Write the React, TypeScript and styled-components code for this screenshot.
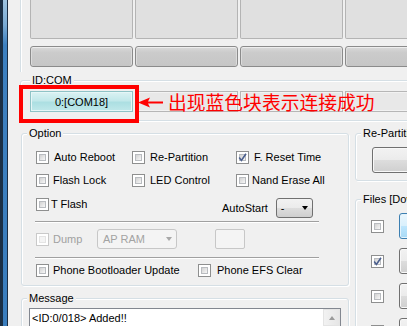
import React from 'react';
import styled, { createGlobalStyle } from 'styled-components';

const GlobalStyle = createGlobalStyle`
  html, body { margin: 0; padding: 0; background: #f0f0f0; }
  body { font-family: "Liberation Sans", Arial, sans-serif; font-size: 11px; color: #000; }
  * { box-sizing: border-box; }
`;

const Window = styled.div`
  width: 407px;
  height: 326px;
  overflow: hidden;
  display: flex;
  background: #f0f0f0;
`;

const Edge = styled.div`
  width: 8px;
  flex-shrink: 0;
  background:
    linear-gradient(to right, #1b2f45 0, #1b2f45 3px, transparent 3px, transparent 7px, #1a2c42 7px),
    linear-gradient(to bottom, #9ec3e0 0, #7aaad3 25px, #3d80c0 45px, #3a7dbd 100%);
`;

const Content = styled.div`
  flex: 0 0 399px;
  padding-left: 12px;
  display: flex;
  flex-direction: column;
  & > * { flex-shrink: 0; }
`;

const TopSection = styled.div`
  height: 72px;
  width: 450px;
  border-left: 1px solid #d5dfe5;
  box-shadow: inset 1px 0 0 #fff;
  padding-left: 9px;
  display: grid;
  grid-template-columns: repeat(4, 103px);
  grid-template-rows: 39px 21px;
  column-gap: 2px;
  row-gap: 7px;
  align-content: start;
`;

const PortSlot = styled.div`
  border: 1px solid #b4b4b4;
  border-top: 0;
  border-radius: 0 0 2px 2px;
  background: #e0e0e0;
`;

const PortButton = styled.div`
  border: 1px solid #8b8b8b;
  border-radius: 3px;
  background: linear-gradient(#dadada, #cbcbcb 30%, #c6c6c6);
  box-shadow: inset 0 1px 0 #ededed, inset 1px 0 0 #dcdcdc, inset -1px 0 0 #dcdcdc;
`;

const Group = styled.div<{ $w: number; $h?: number; $mt?: number }>`
  position: relative;
  width: ${p => p.$w}px;
  ${p => (p.$h ? `height: ${p.$h}px;` : '')}
  margin-top: ${p => p.$mt ?? 0}px;
  border: 1px solid #d5dfe5;
  border-radius: 3px;
  box-shadow: inset 1px 1px 0 #fff, 1px 1px 0 #fff;
  display: flex;
  flex-direction: column;
  flex-shrink: 0;
  & > * { flex-shrink: 0; }
`;

const Legend = styled.div<{ $ml: number }>`
  align-self: flex-start;
  height: 13px;
  line-height: 13px;
  margin: -7px 0 0 ${p => p.$ml}px;
  padding: 0 2px;
  background: #f0f0f0;
  white-space: nowrap;
`;

const FieldRow = styled.div`
  margin: 4px 0 8px;
  padding-left: 9px;
  display: grid;
  grid-template-columns: repeat(4, 103px);
  column-gap: 2px;
  height: 21px;
`;

const ComField = styled.div<{ $active?: boolean }>`
  border: 1px solid ${p => (p.$active ? '#8fc3c6' : '#b6b6b6')};
  background: ${p =>
    p.$active
      ? 'linear-gradient(#dbf2f3, #c2e8ea 45%, #acdfe2 55%, #c0e8ea)'
      : '#e8e8e8'};
  box-shadow: inset 0 0 0 1px ${p => (p.$active ? '#e6f6f7' : '#f2f2f2')};
  display: flex;
  align-items: center;
  justify-content: center;
  white-space: nowrap;
`;

const RedFrame = styled.div`
  position: absolute;
  left: -2px;
  top: 4px;
  width: 120px;
  height: 38px;
  border: 4px solid #ff0000;
`;

const Callout = styled.div`
  position: absolute;
  left: 117px;
  top: 9px;
  display: flex;
  align-items: center;
  gap: 5px;
  white-space: nowrap;
`;

const CalloutText = styled.span`
  font-family: "Noto Sans CJK SC", "Noto Sans CJK JP", sans-serif;
  font-size: 18.8px;
  line-height: 24px;
  color: #ff0000;
`;

const LowerRow = styled.div`
  margin-top: 12px;
  padding-left: 1px;
  display: flex;
  align-items: flex-start;
  gap: 6px;
`;

const Column = styled.div`
  display: flex;
  flex-direction: column;
  flex-shrink: 0;
  & > * { flex-shrink: 0; }
`;

const Row = styled.div<{ $mt: number; $h: number; $align?: string }>`
  margin-top: ${p => p.$mt}px;
  height: ${p => p.$h}px;
  padding-left: 14px;
  display: flex;
  align-items: ${p => p.$align ?? 'center'};
  white-space: nowrap;
`;

const CheckItem = styled.label<{ $w?: number; $gap: number; $disabled?: boolean }>`
  ${p => (p.$w ? `width: ${p.$w}px;` : '')}
  flex-shrink: 0;
  height: 13px;
  display: flex;
  align-items: center;
  gap: ${p => p.$gap}px;
  line-height: 13px;
  color: ${p => (p.$disabled ? '#a0a0a0' : '#000')};
`;

const Box = styled.span<{ $disabled?: boolean }>`
  width: 13px;
  height: 13px;
  flex-shrink: 0;
  border: 1px solid ${p => (p.$disabled ? '#c9c9c9' : '#8e8f8f')};
  background: #fff;
  padding: 2px;
  display: flex;
`;

const BoxInner = styled.span<{ $disabled?: boolean }>`
  flex: 1;
  border: 1px solid ${p => (p.$disabled ? '#e4e4e4' : '#b9bcc0')};
  background: ${p =>
    p.$disabled ? '#f4f4f4' : 'linear-gradient(135deg, #d2d2d2, #f7f7f7)'};
  display: flex;
  align-items: center;
  justify-content: center;
  overflow: visible;
`;

const CheckSvg = styled.svg`
  flex-shrink: 0;
  margin: -2px;
`;

const Check = ({ checked, disabled }: { checked?: boolean; disabled?: boolean }) => (
  <Box $disabled={disabled}>
    <BoxInner $disabled={disabled}>
      {checked && (
        <CheckSvg width="9" height="9" viewBox="0 0 9 9">
          <path d="M1.2 4.6 L3.4 7.4 L8 0.8" fill="none" stroke="#4b5f8e" strokeWidth="1.6" />
        </CheckSvg>
      )}
    </BoxInner>
  </Box>
);

const Option = ({
  label,
  w,
  gap,
  checked,
  disabled,
}: {
  label: string;
  w?: number;
  gap: number;
  checked?: boolean;
  disabled?: boolean;
}) => (
  <CheckItem $w={w} $gap={gap} $disabled={disabled}>
    <Check checked={checked} disabled={disabled} />
    <span>{label}</span>
  </CheckItem>
);

const AutoGroup = styled.div`
  align-self: stretch;
  display: flex;
  align-items: center;
  gap: 8px;
`;

const DropDown = styled.div`
  width: 37px;
  height: 20px;
  border: 1px solid #707070;
  border-radius: 3px;
  background: linear-gradient(#f2f2f2, #ebebeb 50%, #dddddd 51%, #cfcfcf);
  display: flex;
  align-items: center;
  justify-content: space-between;
  padding: 0 4px 0 4px;
`;

const Arrow = styled.span<{ $color: string }>`
  width: 0;
  height: 0;
  border-left: 3.5px solid transparent;
  border-right: 3.5px solid transparent;
  border-top: 4px solid ${p => p.$color};
`;

const Combo = styled.div`
  width: 80px;
  height: 20px;
  border: 1px solid #c7c7c7;
  border-radius: 3px;
  background: #f4f4f4;
  color: #a3a3a3;
  display: flex;
  align-items: center;
  justify-content: space-between;
  padding: 0 4px 0 5px;
`;

const SmallBox = styled.div`
  width: 30px;
  height: 20px;
  margin-left: 38px;
  border: 1px solid #c7c7c7;
  border-radius: 2px;
  background: #f4f4f4;
`;

const Separator = styled.div<{ $mt: number }>`
  margin: ${p => p.$mt}px 0 0 13px;
  width: 284px;
  height: 2px;
  border-top: 1px solid #a0a0a0;
  border-bottom: 1px solid #fff;
`;

const TextArea = styled.div`
  margin: 3px 0 0 7px;
  width: 312px;
  height: 30px;
  border: 1px solid #828790;
  background: #fff;
  display: flex;
`;

const TextContent = styled.div`
  flex: 1;
  padding: 3px 2px;
  line-height: 13px;
  white-space: nowrap;
`;

const ScrollBar = styled.div`
  width: 17px;
  background: #f0f0f0;
  display: flex;
  flex-direction: column;
`;

const ScrollButton = styled.div`
  height: 17px;
  border: 1px solid #e4e4e4;
  background: linear-gradient(to right, #f2f2f2, #e6e6e6);
  display: flex;
  align-items: center;
  justify-content: center;
`;

const UpArrow = styled.span`
  width: 0;
  height: 0;
  border-left: 3.5px solid transparent;
  border-right: 3.5px solid transparent;
  border-bottom: 4px solid #9a9a9a;
`;

const WinButton = styled.div<{ $focus?: boolean; $mt?: number; $ml?: number }>`
  width: 80px;
  height: 26px;
  flex-shrink: 0;
  margin-top: ${p => p.$mt ?? 0}px;
  margin-left: ${p => p.$ml ?? 0}px;
  border: 1px solid ${p => (p.$focus ? '#3c7fb1' : '#707070')};
  border-radius: 3px;
  background: ${p =>
    p.$focus
      ? 'linear-gradient(#eaf6fd, #d9f0fc 50%, #bee6fd 51%, #a7d9f5)'
      : 'linear-gradient(#f2f2f2, #ebebeb 50%, #dddddd 51%, #cfcfcf)'};
  box-shadow: inset 0 0 0 1px ${p => (p.$focus ? '#e4f3fb' : '#f8f8f8')};
`;

const FileList = styled.div`
  margin-top: 7px;
  padding-left: 15px;
  display: flex;
  flex-direction: column;
  gap: 9px;
  & > * { flex-shrink: 0; }
`;

const FileRow = styled.div`
  display: flex;
  align-items: center;
  gap: 15px;
`;

const slots = [0, 1, 2, 3];

export default function App() {
  return (
    <>
      <GlobalStyle />
      <Window>
        <Edge />
        <Content>
          <TopSection>
            {slots.map(i => (
              <PortSlot key={`s${i}`} />
            ))}
            {slots.map(i => (
              <PortButton key={`b${i}`} />
            ))}
          </TopSection>

          <Group $w={430} $mt={8}>
            <Legend $ml={9}>ID:COM</Legend>
            <FieldRow>
              <ComField $active>0:[COM18]</ComField>
              <ComField />
              <ComField />
              <ComField />
            </FieldRow>
            <RedFrame />
            <Callout>
              <svg width="25" height="11" viewBox="0 0 25 11">
                <polygon points="0,5.5 12,0.5 10,4.4 25,4.4 25,6.6 10,6.6 12,10.5" fill="#ff0000" />
              </svg>
              <CalloutText>出现蓝色块表示连接成功</CalloutText>
            </Callout>
          </Group>

          <LowerRow>
            <Column>
              <Group $w={328} $h={153}>
                <Legend $ml={5}>Option</Legend>
                <Row $mt={11} $h={13}>
                  <Option w={96} gap={5} label="Auto Reboot" />
                  <Option w={104} gap={5} label="Re-Partition" />
                  <Option gap={5} label="F. Reset Time" checked />
                </Row>
                <Row $mt={10} $h={13}>
                  <Option w={96} gap={4} label="Flash Lock" />
                  <Option w={104} gap={5} label="LED Control" />
                  <Option gap={3} label="Nand Erase All" />
                </Row>
                <Row $mt={11} $h={20} $align="flex-start">
                  <Option w={186} gap={2} label="T Flash" />
                  <AutoGroup>
                    <span>AutoStart</span>
                    <DropDown>
                      <span>-</span>
                      <Arrow $color="#000" />
                    </DropDown>
                  </AutoGroup>
                </Row>
                <Separator $mt={3} />
                <Row $mt={6} $h={20}>
                  <Option w={61} gap={4} label="Dump" disabled />
                  <Combo>
                    <span>AP RAM</span>
                    <Arrow $color="#a8a8a8" />
                  </Combo>
                  <SmallBox />
                </Row>
                <Separator $mt={8} />
                <Row $mt={5} $h={13}>
                  <Option w={162} gap={4} label="Phone Bootloader Update" />
                  <Option gap={6} label="Phone EFS Clear" />
                </Row>
              </Group>

              <Group $w={328} $h={60} $mt={12}>
                <Legend $ml={5}>Message</Legend>
                <TextArea>
                  <TextContent>&lt;ID:0/018&gt; Added!!</TextContent>
                  <ScrollBar>
                    <ScrollButton>
                      <UpArrow />
                    </ScrollButton>
                  </ScrollBar>
                </TextArea>
              </Group>
            </Column>

            <Column>
              <Group $w={120} $h={48}>
                <Legend $ml={5}>Re-Partition</Legend>
                <WinButton $mt={7} $ml={16} />
              </Group>
              <Group $w={120} $h={200} $mt={18}>
                <Legend $ml={5}>Files [Download]</Legend>
                <FileList>
                  <FileRow>
                    <Check />
                    <WinButton $focus />
                  </FileRow>
                  <FileRow>
                    <Check checked />
                    <WinButton />
                  </FileRow>
                  <FileRow>
                    <Check />
                    <WinButton />
                  </FileRow>
                  <FileRow>
                    <Check />
                    <WinButton />
                  </FileRow>
                </FileList>
              </Group>
            </Column>
          </LowerRow>
        </Content>
      </Window>
    </>
  );
}
